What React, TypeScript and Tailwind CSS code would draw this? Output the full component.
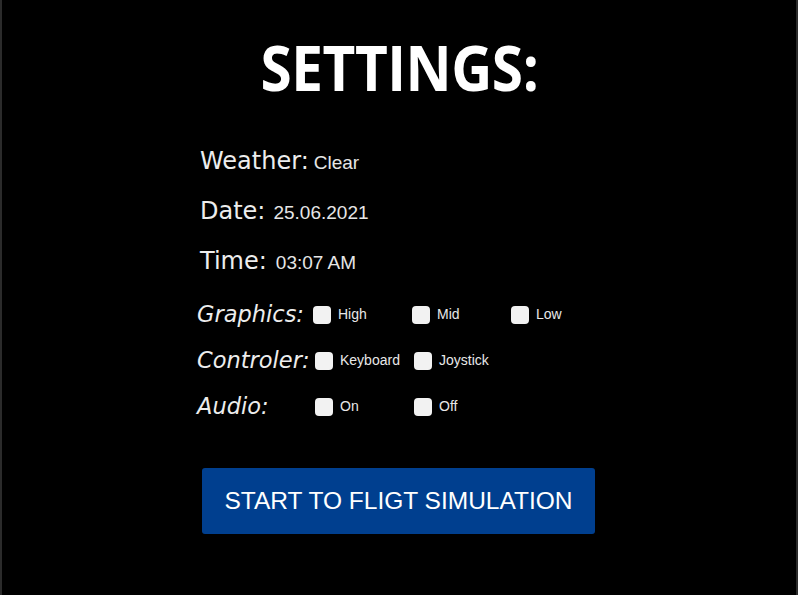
import { useState } from "react";

const infoRows = [
	{ label: "Weather:", value: "Clear", gap: "ml-[5px]" },
	{ label: "Date:", value: "25.06.2021", gap: "ml-[8px]" },
	{ label: "Time:", value: "03:07 AM", gap: "ml-[9px]" },
];

const optionRows = [
	{ label: "Graphics:", options: ["High", "Mid", "Low"] },
	{ label: "Controler:", options: ["Keyboard", "Joystick"] },
	{ label: "Audio:", options: ["On", "Off"] },
];

function Check({ text }: { text: string }) {
	const [on, setOn] = useState(false);
	return (
		<label className="flex items-center gap-[7px] cursor-pointer">
			<span
				onClick={() => setOn(!on)}
				className={
					"w-[18px] h-[18px] rounded-[4px] " +
					(on ? "bg-[#cfd8e8]" : "bg-[#f2f2f2]")
				}
			/>
			<span className="text-[14px] text-[#e8e8e8] font-['Liberation_Sans',Arial,sans-serif]">
				{text}
			</span>
		</label>
	);
}

export default function App() {
	return (
		<div className="w-[798px] h-[595px] bg-black border-x-2 border-x-[#2b2b2b] flex flex-col items-center overflow-hidden">
			<h1 className="mt-[28px] h-[78px] text-[63px] leading-[78px] font-bold text-white font-['Open_Sans',sans-serif] scale-x-[0.9] tracking-[-0.5px]">
				SETTINGS:
			</h1>
			<div className="w-[400px] ml-[2px] mt-[37px] flex flex-col">
				<div className="flex flex-col gap-[18px]">
					{infoRows.map((row) => (
						<div key={row.label} className="flex items-baseline h-[32px]">
							<span className="text-[24px] text-[#ededed] font-['DejaVu_Sans',sans-serif]">
								{row.label}
							</span>
							<span
								className={
									"text-[19px] text-[#e6e6e6] font-['Liberation_Sans',Arial,sans-serif] " +
									row.gap
								}
							>
								{row.value}
							</span>
						</div>
					))}
				</div>
				<div className="mt-[23px] -ml-[3px] flex flex-col gap-[18px]">
					{optionRows.map((row, i) => (
						<div
							key={row.label}
							className="grid grid-cols-[116px_99px_99px_99px] items-center h-[28px]"
						>
							<span className="text-[22.5px] italic text-[#ededed] font-['DejaVu_Sans',sans-serif]">
								{row.label}
							</span>
							{row.options.map((o) => (
								<div key={o} className={i === 0 ? "" : "pl-[2px]"}>
									<Check text={o} />
								</div>
							))}
						</div>
					))}
				</div>
				<button className="mt-[50px] ml-[2px] w-[393px] h-[66px] bg-[#003f8f] rounded-[3px] text-white text-[24.5px] font-['Liberation_Sans',Arial,sans-serif]">
					START TO FLIGT SIMULATION
				</button>
			</div>
		</div>
	);
}
